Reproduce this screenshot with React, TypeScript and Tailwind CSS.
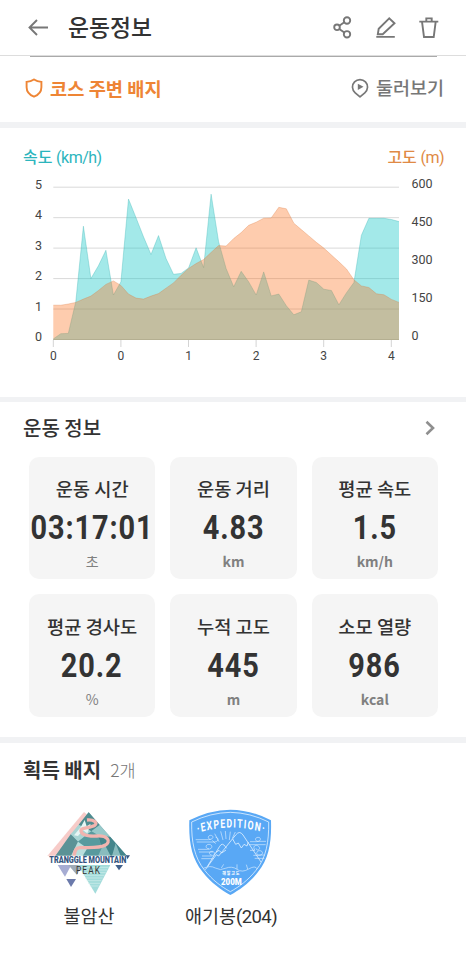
import type { ReactNode } from "react";

type Stat = {
  label: string;
  value: string;
  unit: string;
  unitClass?: string;
};

const stats: Stat[] = [
  { label: "운동 시간", value: "03:17:01", unit: "초" },
  { label: "운동 거리", value: "4.83", unit: "km", unitClass: "font-bold" },
  { label: "평균 속도", value: "1.5", unit: "km/h", unitClass: "font-bold" },
  { label: "평균 경사도", value: "20.2", unit: "%" },
  { label: "누적 고도", value: "445", unit: "m", unitClass: "font-bold" },
  { label: "소모 열량", value: "986", unit: "kcal", unitClass: "font-bold" },
];

const speed = [
  0.02, 0.19, 0.2, 1.24, 3.72, 2.0, 2.42, 2.93, 1.46, 1.89, 4.61, 4.0, 3.37,
  2.79, 3.41, 2.66, 2.14, 2.17, 2.35, 3.01, 2.36, 4.77, 3.21, 2.33, 1.73, 2.24,
  1.89, 1.46, 2.22, 1.43, 1.49, 1.11, 0.81, 0.91, 1.95, 1.87, 1.65, 1.61, 1.14,
  1.53, 1.87, 3.42, 3.98, 3.98, 3.98, 3.94, 3.87,
];

const elevation = [
  135, 135, 140, 146, 159, 171, 193, 217, 231, 213, 179, 163, 159, 171, 181,
  202, 223, 253, 280, 299, 315, 343, 370, 368, 398, 421, 450, 462, 478, 479,
  521, 515, 458, 433, 408, 383, 360, 333, 306, 278, 235, 211, 205, 180, 176,
  158, 146,
];

const LEFT = 53.3;
const RIGHT = 399;
const TOP = 12.2;
const BOTTOM = 164.5;

function linePoints(values: number[], max: number) {
  const step = (RIGHT - LEFT) / (values.length - 1);
  return values
    .map((value, i) => {
      const x = LEFT + i * step;
      const y = BOTTOM - (value / max) * (BOTTOM - TOP);
      return `${x.toFixed(1)},${y.toFixed(1)}`;
    })
    .join(" ");
}

export default function App() {
  return (
    <main className="flex h-[961px] w-[466px] flex-col overflow-hidden bg-white font-['Noto_Sans_CJK_KR',sans-serif] text-[#333]">
      <Header />

      <div className="ml-[30px] h-px w-[407px] shrink-0 bg-[#aaa]" />
      <section className="flex h-[65px] shrink-0 items-center justify-between pr-[22px] pb-[3px] pl-[25px]">
        <div className="flex items-center gap-[7px] text-[18.7px] font-bold text-[#ee8535]">
          <ShieldIcon />
          <span className="whitespace-nowrap">코스 주변 배지</span>
        </div>
        <div className="flex items-center gap-[7px] text-[18.5px] font-medium text-[#777]">
          <PlayPinIcon />
          <span>둘러보기</span>
        </div>
      </section>
      <Divider />

      <section className="h-[269px] shrink-0">
        <div className="flex h-[47px] items-end justify-between pr-[22px] pb-[5px] pl-[23px] text-base leading-6 font-medium">
          <span className="text-[#2cb5bd]">
            속도 <span className="font-[Roboto,sans-serif] font-normal tracking-[-0.5px]">(km/h)</span>
          </span>
          <span className="text-[#e08a45]">
            고도 <span className="font-[Roboto,sans-serif] font-normal tracking-[-0.5px]">(m)</span>
          </span>
        </div>
        <Chart />
      </section>
      <Divider />

      <section className="h-[335px] shrink-0">
        <div className="flex h-[54.500px] items-center justify-between pr-[31px] pb-0.5 pl-[23px]">
          <h2 className="text-xl font-medium">운동 정보</h2>
          <svg className="h-4 w-[10px]" viewBox="0 0 10 16" fill="none" stroke="#8f8f8f" strokeWidth="2.6">
            <path d="M1.500 1.800 8 8l-6.500 6.200" />
          </svg>
        </div>
        <div className="grid grid-cols-3 gap-[15px] pr-7 pl-[29px]">
          {stats.map((stat) => (
            <StatCard key={stat.label} {...stat} />
          ))}
        </div>
      </section>
      <Divider />

      <section className="flex flex-1 flex-col">
        <div className="flex h-[54px] items-center gap-[9px] pl-[23px]">
          <h2 className="text-xl font-bold">획득 배지</h2>
          <span className="pt-0.5 text-[17.5px] font-light text-[#777]">2개</span>
        </div>
        <div className="mt-3 grid grid-cols-[142px_142px] pl-[18px]">
          <Badge name="불암산">
            <MountainBadge />
          </Badge>
          <Badge name="애기봉" height="(204)">
            <ExpeditionBadge />
          </Badge>
        </div>
      </section>
    </main>
  );
}

function Header() {
  return (
    <header className="flex h-[56px] shrink-0 items-center border-b border-[#ddd] pr-[27px] pl-[28px]">
      <svg className="h-5 w-[21px]" viewBox="0 0 21 20" fill="none" stroke="#777" strokeWidth="1.9">
        <path d="M20 9.500H1.500M9 2 1.500 9.500 9 17" />
      </svg>
      <h1 className="ml-[19px] pb-px text-[22.800px] font-medium">운동정보</h1>
      <div className="ml-auto flex items-center gap-[23px]">
        <svg className="h-6 w-5" viewBox="0 0 20 24" fill="none" stroke="#777" strokeWidth="1.900">
          <circle cx="4" cy="11.300" r="2.800" />
          <circle cx="14" cy="4.500" r="3.200" />
          <circle cx="14" cy="18.300" r="3.200" />
          <path d="m6.300 9.700 5-3.400M6.300 13l5 3.600" />
        </svg>
        <svg className="h-6 w-5" viewBox="0 0 20 24" fill="none" stroke="#777" strokeWidth="1.900">
          <path d="M13.200 2.300 2.700 12.800 1.800 18.200H6.700L18.500 7.300ZM.3 20.900h18.500" />
        </svg>
        <svg className="h-6 w-5" viewBox="0 0 20 24" fill="none" stroke="#777" strokeWidth="1.900">
          <path d="M.3 5.600h19M3 5.600l2 15.400h9.700l2-15.400M7.300 5.600V2.400h5.400v3.200" />
        </svg>
      </div>
    </header>
  );
}

function Divider() {
  return <div className="h-[5.500px] shrink-0 bg-[#f1f2f4]" />;
}

function ShieldIcon() {
  return (
    <svg className="h-5 w-[18px]" viewBox="0 0 18 20" fill="none" stroke="#ee8535" strokeWidth="1.900">
      <path d="M9 1.500C6.700 3 4 3.700 1.600 3.900v5.300c0 4.700 3.100 7.800 7.400 9.500 4.300-1.700 7.400-4.800 7.400-9.500V3.900C14 3.700 11.300 3 9 1.500Z" />
    </svg>
  );
}

function PlayPinIcon() {
  return (
    <svg className="h-5 w-[18px]" viewBox="0 0 18 20" fill="none" stroke="#777" strokeWidth="1.700">
      <path d="M9 18.900 4.200 14.800A7.500 7.500 0 1 1 13.800 14.800Z" strokeLinejoin="round" />
      <path d="m6.800 5.700 5.700 3.100-5.700 3.200Z" fill="#777" stroke="none" />
    </svg>
  );
}

function Chart() {
  const speedLine = linePoints(speed, 5);
  const elevationLine = linePoints(elevation, 600);
  const close = `${RIGHT},${BOTTOM + 0.5} ${LEFT},${BOTTOM + 0.5}`;

  return (
    <svg
      className="h-[200px] w-[466px] font-[Roboto,sans-serif] text-[12.500px]"
      viewBox="0 0 466 200"
      fill="#444"
    >
      {[5, 4, 3, 2, 1, 0].map((tick, i) => (
        <g key={tick}>
          <path d={`M${LEFT} ${TOP + i * 30.46}H${RIGHT}`} stroke="#d9d9d9" />
          <text x="38.500" y={14 + i * 30.46} textAnchor="middle">
            {tick}
          </text>
        </g>
      ))}
      {[600, 450, 300, 150, 0].map((tick, i) => (
        <text key={tick} x="411.500" y={13.4 + i * 38} textLength={tick ? 21 : undefined}>
          {tick}
        </text>
      ))}
      {["0", "0", "1", "2", "3", "4"].map((tick, i) => (
        <g key={i}>
          <path d={`M${LEFT + i * 67.6} 165v7`} stroke="#d4d4d4" />
          <text x={LEFT + i * 67.6} y="185" fontSize="12" textAnchor="middle">
            {tick}
          </text>
        </g>
      ))}
      <polygon points={`${speedLine} ${close}`} fill="rgb(25 200 200 / .4)" />
      <polyline points={speedLine} fill="none" stroke="rgb(60 180 180 / .35)" />
      <polygon points={`${elevationLine} ${close}`} fill="rgb(252 114 30 / .36)" />
      <polyline points={elevationLine} fill="none" stroke="rgb(220 120 60 / .3)" />
    </svg>
  );
}

function StatCard({ label, value, unit, unitClass = "" }: Stat) {
  return (
    <div className="flex h-[122.500px] flex-col items-center rounded-[10px] bg-[#f5f5f5] pt-[17.500px] whitespace-nowrap">
      <span className="text-[18.700px] leading-7 font-medium">{label}</span>
      <span className="mt-[8px] scale-x-[.89] font-[Roboto,sans-serif] text-[32.500px] leading-9 font-bold tracking-[1px]">
        {value}
      </span>
      <span className={`mt-[5px] text-[14px] leading-5 text-[#808080] ${unitClass}`}>{unit}</span>
    </div>
  );
}

function Badge({
  name,
  height,
  children,
}: {
  name: string;
  height?: string;
  children: ReactNode;
}) {
  return (
    <div className="flex flex-col items-center">
      {children}
      <span className="mt-1 text-[18.500px] leading-7">
        {name}
        {height ? (
          <span className="font-[Roboto,sans-serif] tracking-[-0.6px]">{height}</span>
        ) : null}
      </span>
    </div>
  );
}

function MountainBadge() {
  return (
    <svg className="size-[88px] overflow-visible" viewBox="46 27 264 264">
      <path d="m163 36 14 12L79 168H53Z" fill="#f7cbc8" />
      <path d="M177 37 292 168H77Z" fill="#72a9ac" />
      <path d="m177 37 33 38-25 19-38-20Z" fill="#4f8c90" />
      <path d="m147 74 38 20-40 31-22-22Z" fill="#a9d5d4" />
      <path d="m123 103 22 22-21 43H77Z" fill="#5b9296" />
      <path d="m210 75 32 36-37-5-20-12Z" fill="#98c9ca" />
      <path d="m242 111 50 57h-69l-18-62Z" fill="#43858b" />
      <path d="m145 125 40-31 20 12 18 62h-64Z" fill="#589a9e" />
      <path d="m145 125 28 20-14 23h-35Z" fill="#b9dfdd" />
      <path d="m223 130 20 38h-38Zm35 0 15 38h-26Z" fill="#89bcbe" />
      <path d="m153 82 12-22 6 19 12-8-10 29-13-9-15 17-12-2Z" fill="#e7f5f4" />
      <path
        d="M172 60c20-2 34 8 23 16-14 9-43 6-41 17 2 13 26 16 48 15 32-2 44 17 24 28-19 10-53 6-75 7-15 1-15 12-18 25"
        fill="none"
        stroke="#f2b4af"
        strokeWidth="10"
      />
      <path d="M84 195h41l-19 35Z" fill="#a6acd3" />
      <path d="M110 237h29l-15 24Z" fill="#6b7aab" />
      <path d="M116 195h40l-14 30Z" fill="#a0abb8" />
      <path d="M145 195h97l-45 86Z" fill="#a3dcdb" />
      <path d="M149 202h88M153 210h79M158 218h70M162 226h62M166 234h53M171 242h44M175 250h36M180 258h27" stroke="#d1eeec" strokeWidth="2" />
      <path d="M257 195h23l-12 16Z" fill="#42618b" />
      <path d="M56 167h234v27H56Z" fill="white" />
      <path d="M289 166h12l-8 12Z" fill="#355580" />
      <text
        x="59"
        y="190"
        fontSize="28"
        fontWeight="900"
        textLength="231"
        lengthAdjust="spacingAndGlyphs"
        fill="#355580"
        className="font-[Roboto,sans-serif]"
      >
        TRANGGLE MOUNTAIN
      </text>
      <text
        x="139"
        y="222"
        fontSize="31"
        textLength="75"
        lengthAdjust="spacingAndGlyphs"
        letterSpacing="4"
        fill="#333"
        className="font-[Roboto,sans-serif]"
      >
        PEAK
      </text>
    </svg>
  );
}

function ExpeditionBadge() {
  return (
    <svg className="size-[88px] overflow-visible" viewBox="50 27 264 264" fill="none" stroke="#e4f2ff" strokeWidth="2.400">
      <path d="M57 61Q117 30 180 29q63 1 122 32c2 63-5 114-39 155-26 33-54 53-83 69-29-16-57-36-83-69C63 175 55 124 57 61Z" fill="#59a8f5" stroke="none" />
      <path d="M64 66Q121 38 180 37q59 1 115 29c1 59-7 107-38 145-24 30-50 49-77 64-27-15-53-34-77-64C72 173 63 125 64 66Z" />
      {/* squeezed horizontally so the lettering comes out condensed */}
      <g transform="scale(.72 1)">
        <path id="badge-arc" d="M104 101Q252 64 404 101" stroke="none" />
        <text
          fontSize="36"
          fontWeight="bold"
          letterSpacing="5"
          textAnchor="middle"
          fill="white"
          stroke="none"
          className="font-[Roboto,sans-serif]"
        >
          <textPath href="#badge-arc" startOffset="50%">
            ·EXPEDITION·
          </textPath>
        </text>
      </g>
      <path d="m105 209 33-45 7 4 51-63q12-15 22 0l54 81M112 198l36-59q8-13 17 1l4 5" />
      <path d="m187 117 9 16 8-4 9 15 8-11 9 5 4-12M137 157l9-6 8 8 13-9" />
      <path d="m133 101 13 24M151 94l7 26M165 93l2 24M180 95l-3 25M195 96l-9 19M126 121l10 10" strokeWidth="1.800" />
      <path d="M76 119h39c16 0 16-13 6-13-9 0-10 12 0 12M79 126h53c14 0 13-14 4-14M83 148h29c17 0 15-15 4-15-12 0-11 14 0 13M86 156h42M95 168h27c14 0 13-14 3-14-10 0-10 11-1 11M93 176h34M239 125h19c15 0 16-13 5-13-10 0-10 12 0 12h24M236 134h50M239 151h15c-10-13 4-19 11-12 9 9-6 16-8 6M249 166h17c14 0 13-14 2-14-12 0-11 14-1 13h17M253 175h29" strokeWidth="1.800" />
      <path d="M99 205q20-10 36-1t30 1q20-8 35 3t35-1 26 0M153 204l7-11M200 207v-14M232 207l-4-13" strokeWidth="1.800" />
      <g fill="white" stroke="none" textAnchor="middle">
        <text x="183" y="226" fontSize="12" fontWeight="bold" letterSpacing="2.500">
          해발고도
        </text>
        <text x="183" y="254" fontSize="25" fontWeight="900" textLength="62" lengthAdjust="spacingAndGlyphs" className="font-[Roboto,sans-serif]">
          200M
        </text>
      </g>
    </svg>
  );
}
